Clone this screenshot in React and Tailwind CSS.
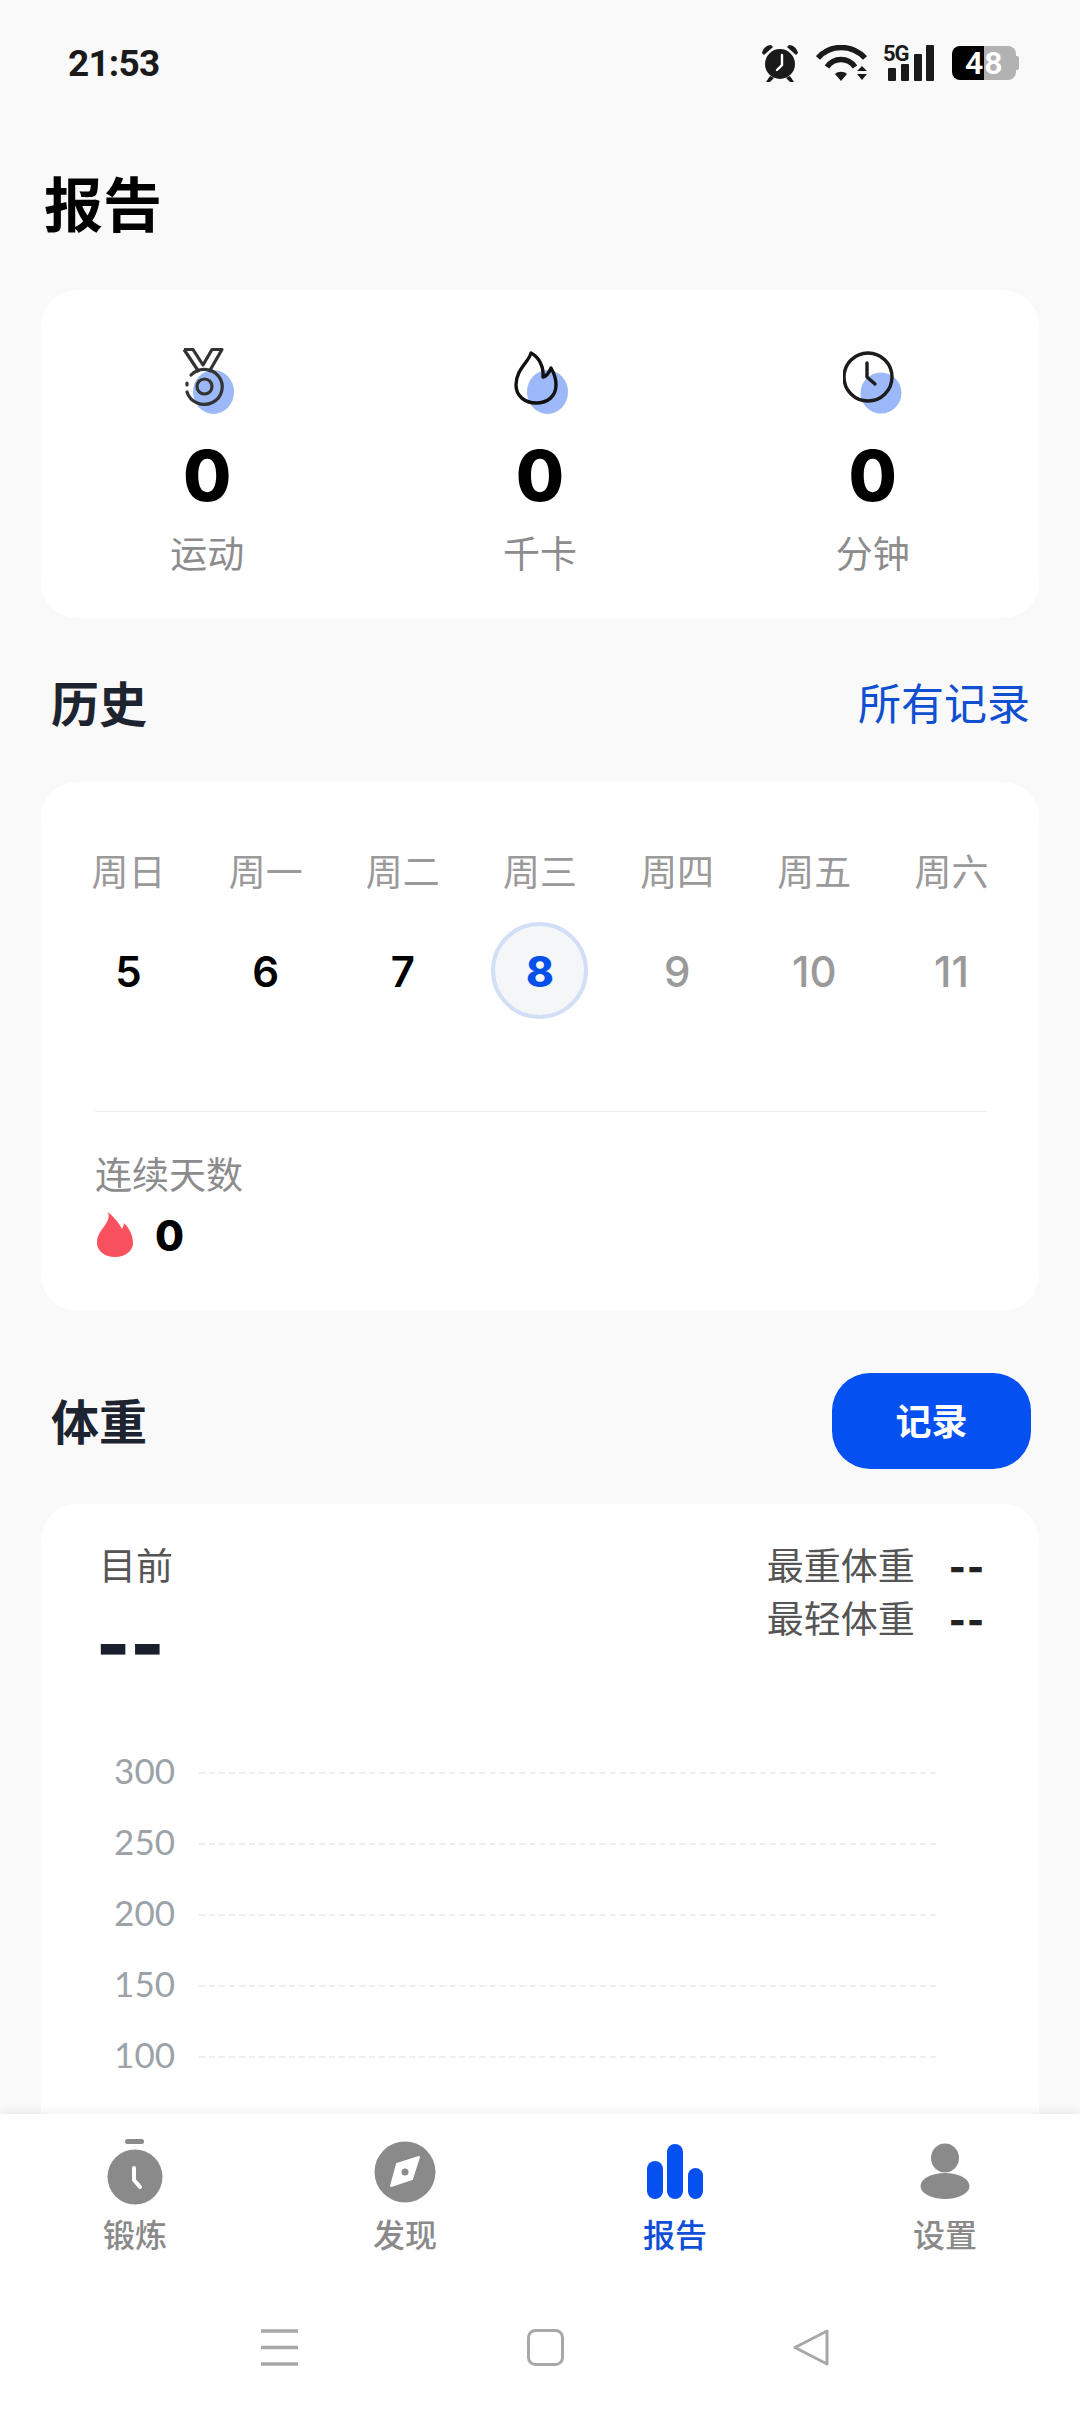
const weekDays = [
  { name: "周日", day: "5" },
  { name: "周一", day: "6" },
  { name: "周二", day: "7" },
  { name: "周三", day: "8", today: true },
  { name: "周四", day: "9", future: true },
  { name: "周五", day: "10", future: true },
  { name: "周六", day: "11", future: true },
];
const chartLabels = ["300", "250", "200", "150", "100", "50"];

function StatusBar() {
  return (
    <div className="flex h-[126px] items-center justify-between pl-[68px] pr-[61px]">
      <span className="font-['Roboto',sans-serif] text-[37px] font-bold leading-none tracking-[-0.8px] text-[#1a1a1a]">21:53</span>
      <div className="flex items-center">
        {/* alarm */}
        <svg width="38" height="38" viewBox="0 0 38 38" fill="#1a1a1a">
          <circle cx="19" cy="20" r="15" />
          <path d="M1 9 C2 4 6 1 10 1 L12 3 L3 11Z M37 9 C36 4 32 1 28 1 L26 3 L35 11Z" />
          <path d="M9 32 L5 38 H9 L13 34Z M29 32 L33 38 H29 L25 34Z" />
          <path d="M21 11 V21 L16 26" fill="none" stroke="#fff" strokeWidth="2.4" strokeLinecap="round" />
        </svg>
        {/* wifi */}
        <svg className="ml-[17px]" width="52" height="36" viewBox="0 0 52 36" fill="none" stroke="#1a1a1a" strokeWidth="5.5">
          <path d="M2 13 C14 -1 36 -1 49 13" />
          <path d="M11 22 C18 12 32 12 39 22" />
          <path d="M19 29 C22 26 28 26 31 29 L25 36Z" fill="#1a1a1a" stroke="none" />
          <path d="M41 26 L46 21 L51 26Z M41 29 H51 L46 35Z" fill="#1a1a1a" stroke="none" />
        </svg>
        {/* 5G + signal */}
        <div className="relative ml-[15px] h-[36px] w-[51px]">
          <span className="absolute left-0 top-[-2px] font-['Roboto',sans-serif] text-[22px] font-bold leading-[22px] tracking-[-1px] text-[#1a1a1a]">5G</span>
          <svg className="absolute left-0 top-0" width="51" height="36" viewBox="0 0 51 36" fill="#1a1a1a">
            <rect x="5" y="23" width="8" height="13" rx="1" />
            <rect x="18" y="19" width="8" height="17" rx="1" />
            <rect x="31" y="9" width="8" height="27" rx="1" />
            <rect x="43" y="0" width="8" height="36" rx="1" />
          </svg>
        </div>
        {/* battery */}
        <div className="relative ml-[18px] flex h-[34px] w-[67px]">
          <div className="h-full w-[32px] rounded-l-[8px] bg-black" />
          <div className="h-full w-[32px] rounded-r-[8px] bg-[#b2b2b2]" />
          <div className="my-auto h-[14px] w-[3px] rounded-r-[2px] bg-[#b2b2b2]" />
          <span className="absolute left-[13px] top-0 font-['Roboto',sans-serif] text-[32px] font-semibold leading-[34px] tracking-[1px] text-white">48</span>
        </div>
      </div>
    </div>
  );
}

function MedalIcon() {
  return (
    <svg width="60" height="68" viewBox="0 0 60 68" fill="none" stroke="#333" strokeWidth="3.2">
      <ellipse cx="36.5" cy="45" rx="20.5" ry="22" fill="#9db8f8" stroke="none" />
      <path d="M7 2.5 H16 L26 18 L35 2.5 H45 L32 25" strokeLinejoin="round" />
      <path d="M7 2.5 L22 25" />
      <path d="M14 28 A18 17.5 0 1 1 10 45" strokeLinecap="round" />
      <path d="M10 36 V38" strokeLinecap="round" />
      <circle cx="27.5" cy="39.5" r="7.5" />
    </svg>
  );
}

function FlameIcon() {
  return (
    <svg width="60" height="68" viewBox="0 0 60 68" fill="none" stroke="#111" strokeWidth="3.4">
      <ellipse cx="37.5" cy="45" rx="20.5" ry="22" fill="#9db8f8" stroke="none" />
      <path d="M21 6 C19 15 6 22 6 38 C6 49 15 56 26 56 C38 56 46 49 46 38 C46 31 44 26 41 21 C39 26 37 29 33 30 C34 20 29 10 21 6Z" strokeLinejoin="round" />
    </svg>
  );
}

function ClockIcon() {
  return (
    <svg width="60" height="68" viewBox="0 0 60 68" fill="none" stroke="#1c1c1c" strokeWidth="3.4">
      <circle cx="38" cy="46" r="20.5" fill="#9db8f8" stroke="none" />
      <circle cx="25" cy="30" r="24" />
      <path d="M24 16 V30 L32 37" strokeLinecap="round" strokeLinejoin="round" />
    </svg>
  );
}

function Stat({ icon, label }) {
  return (
    <div className="flex flex-col items-center">
      {icon}
      <div className="mt-[26px] font-['Inter',sans-serif] text-[70px] font-extrabold leading-[70px] text-black">0</div>
      <div className="mt-[19px] h-[50px] text-[37px] leading-[44px] text-[#8c8c8c]">{label}</div>
    </div>
  );
}

function SectionTitle({ children }) {
  return <h2 className="h-[60px] pl-[10px] text-[48px] font-bold leading-[56px] text-[#1e2330]">{children}</h2>;
}

function TabIcon({ name }) {
  if (name === "train") {
    return (
      <svg width="56" height="66" viewBox="0 0 56 66" fill="#8a8a8a">
        <rect x="18" y="0" width="19" height="5" rx="2.5" />
        <circle cx="28" cy="38" r="27.5" />
        <path d="M27 29 V41 L33 48" fill="none" stroke="#fff" strokeWidth="4" strokeLinecap="round" strokeLinejoin="round" />
      </svg>
    );
  }
  if (name === "discover") {
    return (
      <svg width="62" height="66" viewBox="-31 -33 62 66">
        <circle cx="0" cy="0" r="30.5" fill="#8a8a8a" />
        <path d="M14 -15 L7 7 L-14 14 L-8 -8Z" fill="#fff" stroke="#fff" strokeWidth="2" strokeLinejoin="round" />
        <circle cx="0" cy="0" r="3.5" fill="#8a8a8a" />
      </svg>
    );
  }
  if (name === "report") {
    return (
      <svg width="56" height="66" viewBox="0 0 56 66" fill="#0550f0">
        <rect x="0" y="22" width="16" height="38" rx="8" />
        <rect x="20" y="5" width="16" height="55" rx="8" />
        <rect x="41" y="29" width="15" height="31" rx="7.5" />
      </svg>
    );
  }
  return (
    <svg width="50" height="66" viewBox="0 0 50 66" fill="#8a8a8a">
      <ellipse cx="25" cy="19" rx="14" ry="14.5" />
      <ellipse cx="25" cy="47" rx="24.5" ry="13" />
    </svg>
  );
}

function TabItem({ name, label, active }) {
  return (
    <div className="flex flex-col items-center">
      <TabIcon name={name} />
      <span className={`mt-[11px] h-[40px] text-[32px] font-medium leading-[35px] ${active ? "text-[#0f4fd8]" : "text-[#8a8a8a]"}`}>{label}</span>
    </div>
  );
}

export default function App() {
  return (
    <div className="flex h-[2414px] w-[1080px] flex-col overflow-hidden bg-[#f9f9fa] font-['Noto_Sans_CJK_SC','Noto_Sans_CJK_JP',sans-serif]">
      <div className="min-h-0 flex-1 overflow-hidden">
        <StatusBar />
        <div className="px-[41px]">
          <h1 className="mt-[48px] h-[60px] pl-[3px] text-[59px] font-bold leading-[55px] text-black">报告</h1>

          <div className="mt-[56px] grid h-[328px] grid-cols-3 rounded-[36px] bg-white pt-[57px]">
            <Stat icon={<MedalIcon />} label="运动" />
            <Stat icon={<FlameIcon />} label="千卡" />
            <Stat icon={<ClockIcon />} label="分钟" />
          </div>

          <div className="mt-[55px] flex items-center justify-between pr-[9px]">
            <SectionTitle>历史</SectionTitle>
            <span className="h-[60px] text-[43px] leading-[56px] text-[#0f4fd0]">所有记录</span>
          </div>

          <div className="mt-[49px] h-[529px] rounded-[36px] bg-white pt-[66px]">
            <div className="grid grid-cols-7 px-[19px]">
              {weekDays.map((d) => (
                <div key={d.name} className="flex flex-col items-center">
                  <span className="h-[50px] text-[37px] leading-[44px] text-[#9a9a9a]">{d.name}</span>
                  <div
                    className={`mt-[24px] flex h-[97px] w-[97px] items-center justify-center rounded-full pt-[2px] font-['Inter',sans-serif] text-[42px] ${
                      d.today
                        ? "border-[4px] border-[#d3dff6] bg-[#f5f6f8] font-extrabold text-[#0550e8]"
                        : d.future
                          ? "font-medium text-[#9a9a9a]"
                          : "font-semibold text-black"
                    }`}
                  >
                    {d.day}
                  </div>
                </div>
              ))}
            </div>
            <div className="ml-[54px] mr-[52px] mt-[92px] border-t border-[#eeeeee]" />
            <div className="ml-[54px] mt-[39px] h-[50px] text-[37px] leading-[44px] text-[#8c8c8c]">连续天数</div>
            <div className="ml-[56px] mt-[11px] flex h-[45px] items-center">
              <svg width="36" height="45" viewBox="0 0 36 45" fill="#f9515f">
                <path d="M11 0 C17 5 22 11 25 17 C26 15 27 13 27 11 C32 16 36 23 36 31 C36 39 28 45 18 45 C8 45 0 39 0 31 C0 24 3 20 6 16 C10 11 13 6 11 0Z" />
              </svg>
              <span className="ml-[22px] pt-[2px] font-['Inter',sans-serif] text-[42px] font-extrabold text-black">0</span>
            </div>
          </div>

          <div className="mt-[62px] flex items-center justify-between pr-[8px]">
            <SectionTitle>体重</SectionTitle>
            <button className="flex h-[96px] w-[199px] items-center justify-center rounded-[38px] bg-[#0550f0] pb-[4px] text-[36px] font-bold text-white">
              记录
            </button>
          </div>

          <div className="mt-[35px] rounded-[36px] bg-white pt-[38px]">
            <div className="flex justify-between pl-[58px] pr-[54px]">
              <div>
                <div className="h-[50px] text-[37px] leading-[44px] text-[#555]">目前</div>
                <div className="ml-[-3px] mt-[22px] h-[60px] font-['Inter',sans-serif] text-[72px] font-black leading-[60px] text-[#1a1f2e]">--</div>
              </div>
              <div className="grid grid-cols-[auto_auto] gap-x-[34px] self-start text-[37px] text-[#555]">
                <span className="h-[53px] leading-[45px]">最重体重</span>
                <span className="h-[53px] font-['Inter',sans-serif] text-[36px] font-black leading-[51px] tracking-[1px] text-[#222]">--</span>
                <span className="h-[53px] leading-[45px]">最轻体重</span>
                <span className="h-[53px] font-['Inter',sans-serif] text-[36px] font-black leading-[51px] tracking-[1px] text-[#222]">--</span>
              </div>
            </div>
            <div className="mt-[63px]">
              {chartLabels.map((label) => (
                <div key={label} className="flex h-[71px] items-center">
                  <span className="w-[134px] pb-[6px] text-right font-['Lato',sans-serif] text-[35px] leading-[40px] text-[#9ca3a8]">{label}</span>
                  <div className="ml-[24px] w-[737px] border-t-2 border-dashed border-[#eceef0]" />
                </div>
              ))}
            </div>
          </div>
        </div>
      </div>

      <div className="relative flex h-[300px] shrink-0 flex-col bg-white pt-[25px] shadow-[0_-3px_8px_rgba(0,0,0,0.06)]">
        <div className="grid grid-cols-4">
          <TabItem name="train" label="锻炼" />
          <TabItem name="discover" label="发现" />
          <TabItem name="report" label="报告" active />
          <TabItem name="me" label="设置" />
        </div>
        <div className="mt-[73px] flex items-center justify-center gap-[229px] pl-[11px]">
          <svg width="37" height="37" viewBox="0 0 37 37" fill="none" stroke="#a8a8a8" strokeWidth="3.5">
            <path d="M0 2 H37 M0 18.5 H37 M0 35 H37" />
          </svg>
          <svg width="37" height="37" viewBox="0 0 37 37" fill="none" stroke="#a8a8a8" strokeWidth="3">
            <rect x="1.5" y="1.5" width="34" height="34" rx="7" />
          </svg>
          <svg width="37" height="37" viewBox="0 0 37 37" fill="none" stroke="#a8a8a8" strokeWidth="3" strokeLinejoin="round">
            <path d="M2 18.5 L34 2 V35Z" />
          </svg>
        </div>
      </div>
    </div>
  );
}
